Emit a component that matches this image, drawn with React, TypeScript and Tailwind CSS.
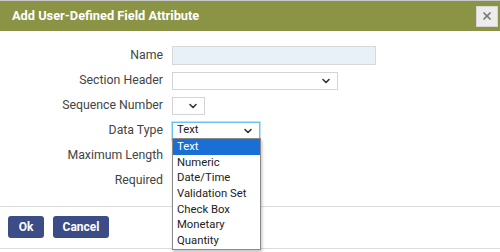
import { ChevronDown, X } from 'lucide-react';

const labelFont = { fontFamily: 'Roboto, "Liberation Sans", sans-serif' };
const optionFont = { fontFamily: 'Roboto, "Noto Sans", sans-serif' };

const dataTypes = ['Text', 'Numeric', 'Date/Time', 'Validation Set', 'Check Box', 'Monetary', 'Quantity'];

function FieldRow({ label, children }: { label: string; children?: React.ReactNode }) {
  return (
    <div className="flex h-[25px] items-center">
      <div className="w-[163px] text-right text-[12.3px] text-[#444]" style={labelFont}>
        {label}
      </div>
      <div className="ml-[9px] flex items-center">{children}</div>
    </div>
  );
}

function FakeSelect({ width, value, focused }: { width: string; value?: string; focused?: boolean }) {
  return (
    <div
      className={[
        'flex h-[18px] items-center justify-between bg-white pl-[4px] pr-[5px] text-[11.3px] text-[#222]',
        width,
        focused ? 'border border-[#6cc4ee] shadow-[0_0_0_1px_#b8e2f6]' : 'border border-[#d4d4d4]',
      ].join(' ')}
      style={optionFont}
    >
      <span>{value}</span>
      <ChevronDown size={12} strokeWidth={3.2} className="text-[#333]" />
    </div>
  );
}

export default function App() {
  return (
    <div className="relative h-[252px] w-[500px] overflow-hidden bg-white">
      <div className="border-t border-[#c8c8c8]" />
      <div className="flex h-[30px] items-center justify-between bg-[#8a9444] pl-[12px] pr-[2px]">
        <h1 className="text-[12.8px] font-bold text-white" style={labelFont}>
          Add User-Defined Field Attribute
        </h1>
        <button
          type="button"
          className="flex h-[21px] w-[22px] items-center justify-center border border-[#d6d6d6] bg-[#ececec]"
        >
          <X size={12} strokeWidth={3.5} className="text-[#777]" />
        </button>
      </div>

      <div className="pb-[13px] pt-[12px]">
        <FieldRow label="Name">
          <div className="h-[19px] w-[204px] border border-[#d8d8d8] bg-[#e8f0f8]" />
        </FieldRow>
        <FieldRow label="Section Header">
          <FakeSelect width="w-[166px]" />
        </FieldRow>
        <FieldRow label="Sequence Number">
          <FakeSelect width="w-[33px]" />
        </FieldRow>
        <FieldRow label="Data Type">
          <FakeSelect width="w-[88px]" value="Text" focused />
        </FieldRow>
        <FieldRow label="Maximum Length" />
        <FieldRow label="Required" />
      </div>

      <div className="flex h-[43px] items-start gap-[9px] border-b border-t border-[#dcdcdc] pl-[8px] pt-[9px]">
        <button
          type="button"
          className="h-[22px] w-[36px] rounded-[3px] bg-[#3c4c86] text-[12px] font-bold text-white"
          style={labelFont}
        >
          Ok
        </button>
        <button
          type="button"
          className="h-[22px] w-[56px] rounded-[3px] bg-[#3c4c86] text-[12px] font-bold text-white"
          style={labelFont}
        >
          Cancel
        </button>
      </div>

      <ul
        className="absolute left-[172px] top-[138px] w-[89px] border border-[#8a8a8a] bg-white text-[11.3px] text-[#222] shadow-[1px_2px_3px_rgba(0,0,0,0.25)]"
        style={optionFont}
      >
        {dataTypes.map((t, i) => (
          <li
            key={t}
            className={[
              'h-[15.7px] pl-[4px] leading-[15.7px]',
              i === 0 ? 'bg-[#1a6fd6] text-white' : '',
            ].join(' ')}
          >
            {t}
          </li>
        ))}
      </ul>
    </div>
  );
}
